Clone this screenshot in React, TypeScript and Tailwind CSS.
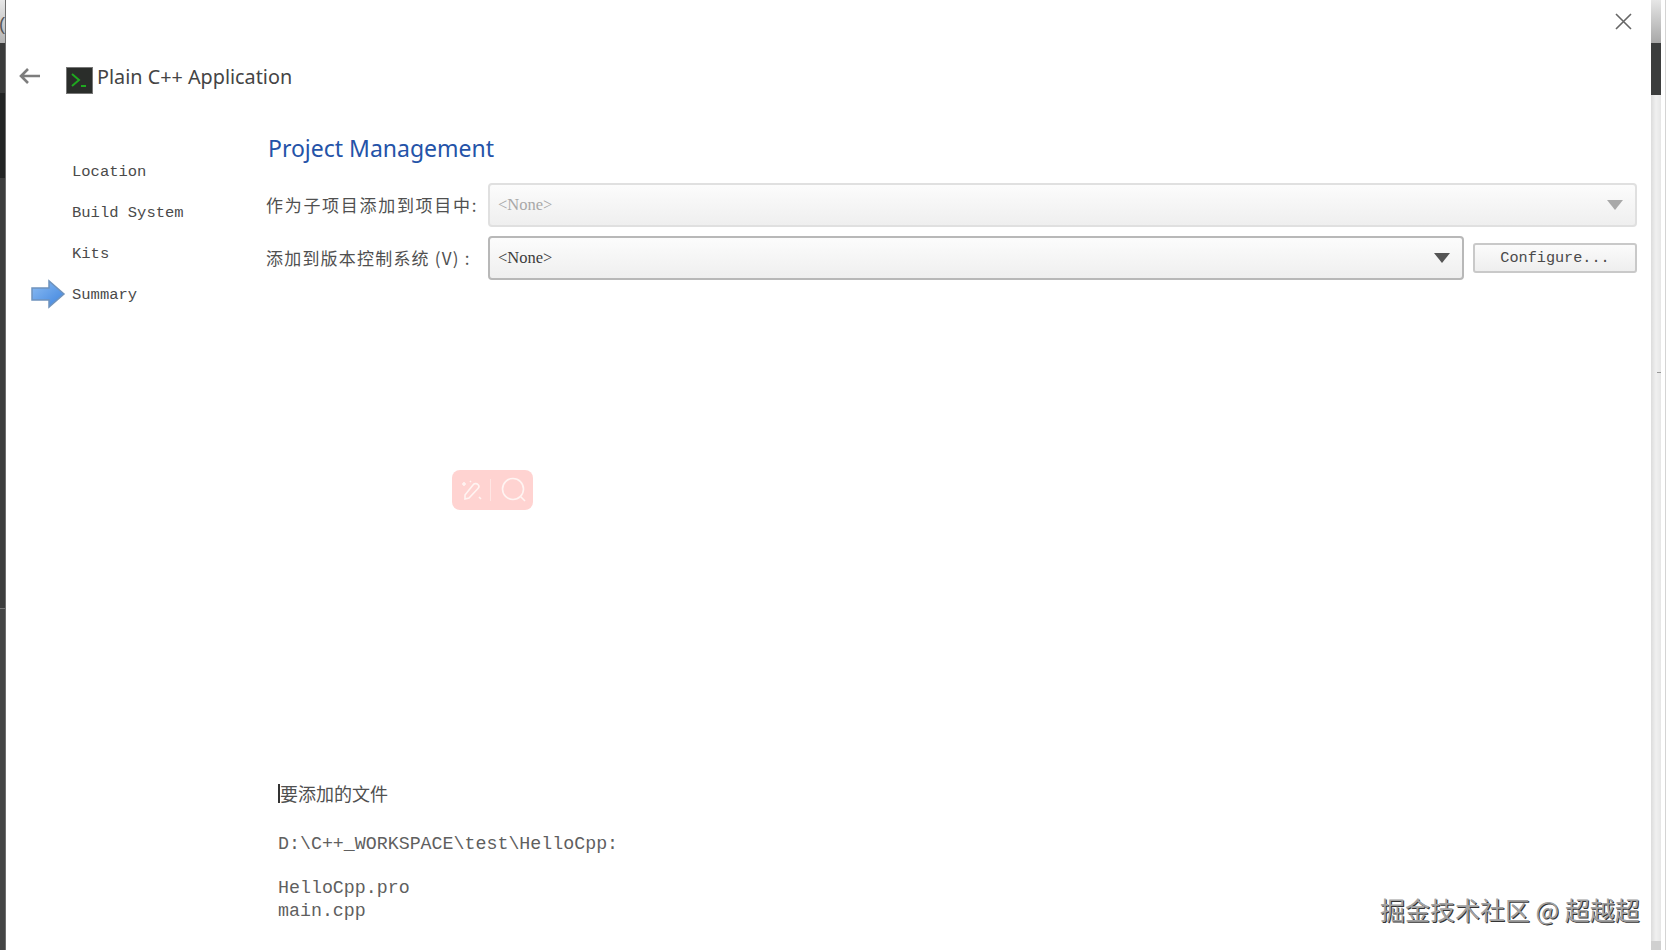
import React from "react";

const cn = '"Liberation Serif","Noto Sans CJK SC",serif';

function Rail() {
  return (
    <div className="flex w-[6px] shrink-0 flex-col overflow-hidden border-r border-[#6e6e6e]">
      <div className="h-[43px] bg-gradient-to-b from-[#e8e8e8] to-[#b4b4b4] pt-[14px] text-[18px] leading-[20px] text-[#555555]" style={{ fontFamily: '"Liberation Sans",sans-serif' }}>
        <span className="-ml-[1px] block">(</span>
      </div>
      <div className="h-[50px] bg-[#3a3b3b]" />
      <div className="h-[85px] bg-[#222424]" />
      <div className="h-[430px] bg-[#3c3d3d]" />
      <div className="h-[1px] bg-[#777777]" />
      <div className="flex-1 bg-[#444545]" />
    </div>
  );
}

function ScrollStrip() {
  return (
    <div className="flex w-[16px] shrink-0 justify-between border-r border-[#d4d4d4] bg-white pl-[1px]">
      <div className="flex w-[10px] flex-col bg-gradient-to-r from-[#dcdcdc] via-[#f0f0f0] to-[#e6e6e6]">
        <div className="h-[43px] bg-gradient-to-b from-[#e6e6e6] to-[#a8a8a8]" />
        <div className="h-[52px] bg-[#3b3d3d]" />
        <div className="ml-[6px] mt-[277px] h-[1px] w-[4px] bg-[#999999]" />
        <div className="mt-auto h-[9px] bg-[#d0d0d0]" />
      </div>
    </div>
  );
}

function Caret({ color }: { color: string }) {
  return (
    <svg width="16" height="10" viewBox="0 0 16 10" className="shrink-0">
      <path d="M0 0H16L8 10Z" fill={color} />
    </svg>
  );
}

function Combo({ muted, className }: { muted?: boolean; className: string }) {
  return (
    <div
      className={`flex h-[44px] items-center justify-between rounded-[4px] border-2 bg-gradient-to-b from-[#fcfcfc] to-[#efefef] pl-[8px] pr-[12px] text-[16.5px] ${
        muted ? "border-[#e0e0e0] text-[#a8a8a8]" : "border-[#b8b8b8] text-[#3c3c3c]"
      } ${className}`}
      style={{ fontFamily: cn }}
    >
      <span>&lt;None&gt;</span>
      <Caret color={muted ? "#a9a9a9" : "#555555"} />
    </div>
  );
}

export default function App() {
  return (
    <div className="relative flex h-[950px] w-[1666px] overflow-hidden bg-white">
      <Rail />
      <div className="flex min-w-0 flex-1 flex-col">
        <div className="flex justify-end pr-[17px] pt-[11px]">
          <svg width="20" height="20" viewBox="0 0 20 20" fill="none" stroke="#666666" strokeWidth="1.6">
            <path d="M3 3L18 18M18 3L3 18" />
          </svg>
        </div>
        <div className="mt-[27px] flex h-[36px] items-center">
          <svg width="24" height="18" viewBox="0 0 24 18" fill="none" stroke="#7d7d7d" strokeWidth="2.6" className="ml-[12px]">
            <path d="M22 9H3M10 2L3 9L10 16" />
          </svg>
          <div className="ml-[24px] mt-[8px] flex h-[27px] w-[27px] items-center justify-center border border-[#777777] bg-[#2a2d2a]">
            <svg width="19" height="16" viewBox="0 0 19 16" fill="none" stroke="#1fa81f" strokeWidth="2">
              <path d="M2 2L9 8L2 14" />
              <path d="M11 14H16" />
            </svg>
          </div>
          <span className="ml-[4px] translate-y-[1px] text-[19.8px] text-[#444444]" style={{ fontFamily: '"Noto Sans",sans-serif' }}>
            Plain C++ Application
          </span>
        </div>
        <div className="flex min-h-0 flex-1">
          <div className="w-[260px] shrink-0 pt-[66px] text-[15.5px] leading-[24px] text-[#4a4a4a]" style={{ fontFamily: '"Liberation Mono",monospace' }}>
            <div className="ml-[66px] h-[41px]">Location</div>
            <div className="ml-[66px] h-[41px]">Build System</div>
            <div className="ml-[66px] h-[41px]">Kits</div>
            <div className="flex h-[41px] items-start">
              <svg width="36" height="30" viewBox="0 0 36 30" className="ml-[25px] mt-[-4px] shrink-0">
                <defs>
                  <linearGradient id="arrow" x1="0" x2="1" y1="0" y2="1">
                    <stop offset="0" stopColor="#8dbdf3" />
                    <stop offset="1" stopColor="#3d83de" />
                  </linearGradient>
                </defs>
                <path d="M1 9H18V2L33 15L18 28V21H1Z" fill="url(#arrow)" stroke="#6f93bd" strokeWidth="1.5" />
              </svg>
              <span className="ml-[5px]">Summary</span>
            </div>
          </div>
          <div className="flex min-w-0 flex-1 flex-col pr-[13px]">
            <h1 className="mt-[34px] h-[40px] pl-[2px] text-[23px] leading-[40px] text-[#2453a8]" style={{ fontFamily: '"Noto Sans",sans-serif' }}>
              Project Management
            </h1>
            <div className="mt-[15px] flex items-center">
              <span className="w-[222px] shrink-0 text-[17px] tracking-[1.7px] text-[#505050]" style={{ fontFamily: '"Noto Sans CJK SC",sans-serif' }}>
                作为子项目添加到项目中:
              </span>
              <Combo muted className="flex-1" />
            </div>
            <div className="mt-[9px] flex items-center">
              <span className="w-[222px] shrink-0 text-[17px] tracking-[1.2px] text-[#505050]" style={{ fontFamily: '"Noto Sans CJK SC",sans-serif' }}>
                添加到版本控制系统 (V) :
              </span>
              <Combo className="flex-1" />
              <button
                className="ml-[9px] h-[30px] w-[164px] shrink-0 rounded-[3px] border-2 border-[#c9c9c9] bg-gradient-to-b from-[#fbfbfb] to-[#eeeeee] text-[15.2px] text-[#4a4a4a]"
                style={{ fontFamily: '"Liberation Mono",monospace' }}
              >
                Configure...
              </button>
            </div>
            <div className="mt-auto pb-[27px] pl-[12px] text-[18.3px] leading-[23px] text-[#5f5f5f]" style={{ fontFamily: '"Liberation Mono",monospace' }}>
              <div className="flex items-center text-[18px] text-[#505050]" style={{ fontFamily: '"Noto Sans CJK SC",sans-serif' }}>
                <span className="h-[19px] w-[2px] bg-[#333333]" />
                <span>要添加的文件</span>
              </div>
              <div className="mt-[28px]">D:\C++_WORKSPACE\test\HelloCpp:</div>
              <div className="mt-[21px]">HelloCpp.pro</div>
              <div>main.cpp</div>
            </div>
          </div>
        </div>
      </div>
      <ScrollStrip />

      <div className="absolute left-[452px] top-[470px] flex h-[40px] w-[81px] items-center justify-center gap-[7px] rounded-[8px] bg-[#ffd3d1]">
        <svg width="24" height="24" viewBox="0 0 24 24" fill="none" stroke="#fff4f2" strokeWidth="1.6">
          <path d="M6 17L14 7C15 5.500 17.500 5 19 6.500C20.500 8 20 9.500 19 10.500L10 20L6 21Z" />
          <path d="M3 6H7M5 4V8M20 19L22 21M11 3L12 4" />
        </svg>
        <span className="h-[22px] w-[1px] bg-[#ffe6e4]" />
        <svg width="28" height="28" viewBox="0 0 28 28" fill="none" stroke="#fff4f2" strokeWidth="1.6" className="translate-x-[2px]">
          <circle cx="13" cy="13" r="10.5" />
          <path d="M20.5 20.500L25 25" />
        </svg>
      </div>

      <div
        className="absolute left-[1380px] top-[892px] text-[25px] leading-[34px] text-[#a2a2a2] [text-shadow:1px_1px_0_#333333]"
        style={{ fontFamily: '"Noto Sans CJK SC",sans-serif' }}
      >
        掘金技术社区 @ 超越超
      </div>
    </div>
  );
}
